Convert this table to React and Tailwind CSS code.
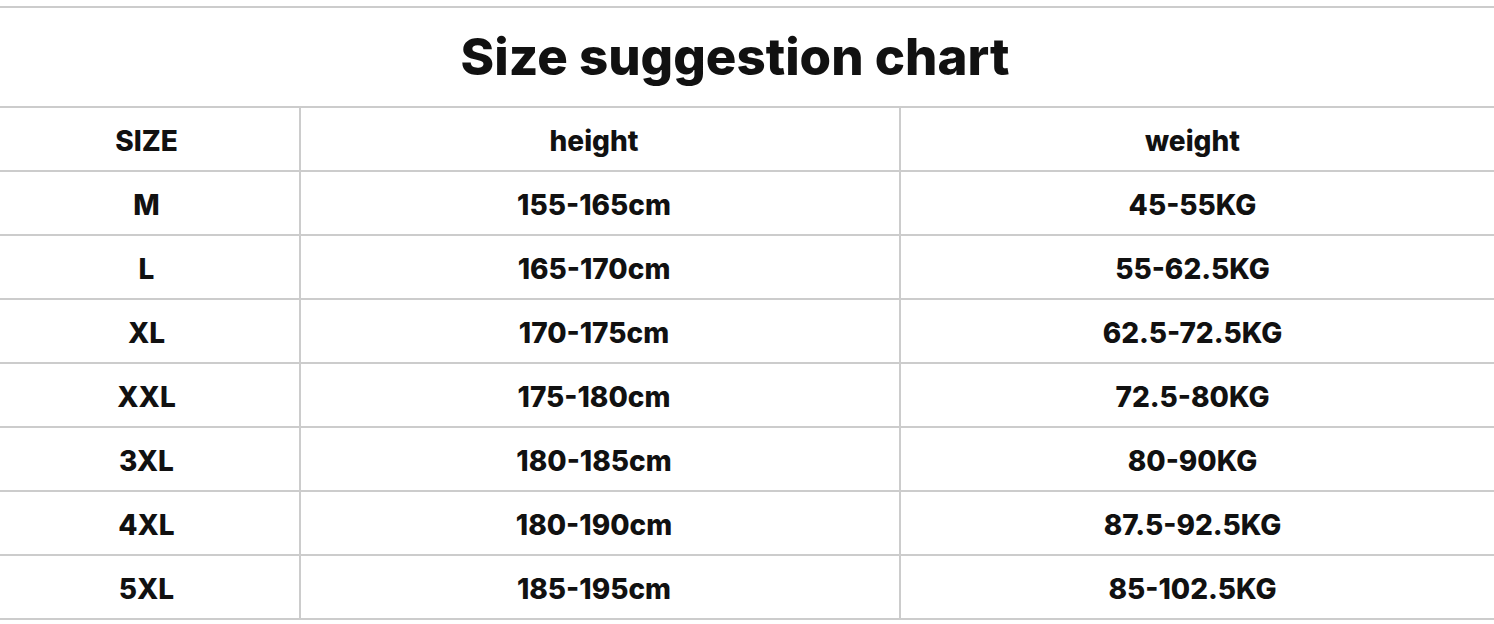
import React from "react";

const rows = [
  ["SIZE", "height", "weight"],
  ["M", "155-165cm", "45-55KG"],
  ["L", "165-170cm", "55-62.5KG"],
  ["XL", "170-175cm", "62.5-72.5KG"],
  ["XXL", "175-180cm", "72.5-80KG"],
  ["3XL", "180-185cm", "80-90KG"],
  ["4XL", "180-190cm", "87.5-92.5KG"],
  ["5XL", "185-195cm", "85-102.5KG"],
];

export default function App() {
  return (
    <div
      className="w-[1494px] h-[624px] bg-white pt-[6px] text-[#111]"
      style={{ fontFamily: "Inter, 'Liberation Sans', sans-serif" }}
    >
      <div className="border-t-2 border-b-2 border-[#cccccc]">
        <div className="h-[98px] flex items-center justify-center pr-[24px] text-[51px] font-extrabold">
          Size suggestion chart
        </div>
        {rows.map((r, i) => (
          <div key={i} className="flex h-[64px] border-t-2 border-[#cccccc]">
            <div className="w-[299px] flex items-center justify-center pr-[6px] pt-[3px] text-[28px] font-extrabold">
              {r[0]}
            </div>
            <div className="w-[602px] border-l-2 border-r-2 border-[#cccccc] flex items-center justify-center pr-[12px] pt-[3px] text-[28px] font-extrabold">
              {r[1]}
            </div>
            <div className="flex-1 flex items-center justify-center pr-[10px] pt-[3px] text-[28px] font-extrabold">
              {r[2]}
            </div>
          </div>
        ))}
      </div>
    </div>
  );
}
